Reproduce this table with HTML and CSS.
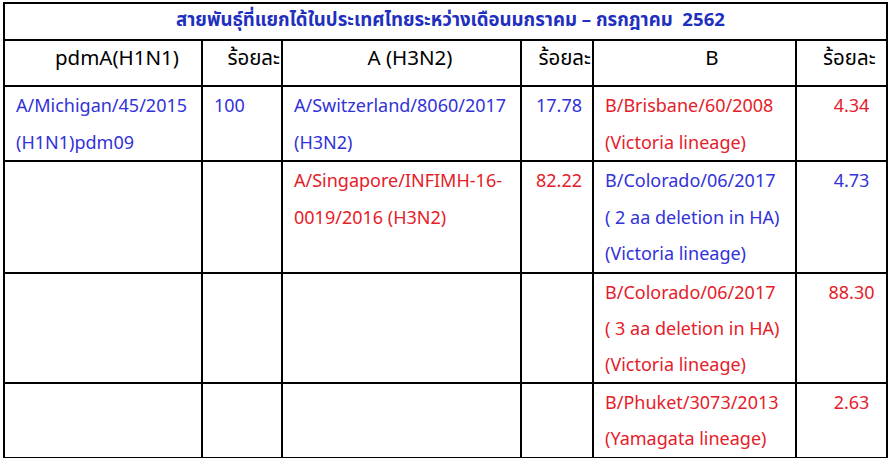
FILE: index.html
```html
<!DOCTYPE html>
<html lang="th">
<head>
<meta charset="utf-8">
<title>สายพันธุ์ที่แยกได้ในประเทศไทย</title>
<link rel="stylesheet" href="styles.css">
</head>
<body>
<table class="strains">
  <colgroup>
    <col class="c1"><col class="c2"><col class="c3"><col class="c4"><col class="c5"><col class="c6">
  </colgroup>
  <tr class="title-row">
    <td colspan="6" class="title">สายพันธุ์ที่แยกได้ในประเทศไทยระหว่างเดือนมกราคม – กรกฎาคม&nbsp; 2562</td>
  </tr>
  <tr class="head-row">
    <th class="h-1">pdmA(H1N1)</th>
    <th class="h-pct">ร้อยละ</th>
    <th class="h-3">A (H3N2)</th>
    <th class="h-pct">ร้อยละ</th>
    <th class="h-5">B</th>
    <th class="h-last">ร้อยละ</th>
  </tr>
  <tr class="r1">
    <td class="blue">A/Michigan/45/2015<br>(H1N1)pdm09</td>
    <td class="blue">100</td>
    <td class="blue">A/Switzerland/8060/2017<br>(H3N2)</td>
    <td class="blue num">17.78</td>
    <td class="red">B/Brisbane/60/2008<br>(Victoria lineage)</td>
    <td class="red last">4.34</td>
  </tr>
  <tr class="r2">
    <td></td>
    <td></td>
    <td class="red">A/Singapore/INFIMH-16-<br>0019/2016 (H3N2)</td>
    <td class="red num">82.22</td>
    <td class="blue">B/Colorado/06/2017<br>( 2 aa deletion in HA)<br>(Victoria lineage)</td>
    <td class="blue last">4.73</td>
  </tr>
  <tr class="r3">
    <td></td>
    <td></td>
    <td></td>
    <td></td>
    <td class="red">B/Colorado/06/2017<br>( 3 aa deletion in HA)<br>(Victoria lineage)</td>
    <td class="red last">88.30</td>
  </tr>
  <tr class="r4">
    <td></td>
    <td></td>
    <td></td>
    <td></td>
    <td class="red">B/Phuket/3073/2013<br>(Yamagata lineage)</td>
    <td class="red last">2.63</td>
  </tr>
</table>
</body>
</html>
```
FILE: styles.css
```css
html, body {
  margin: 0;
  padding: 0;
  background: #ffffff;
}
body {
  padding: 2px 0 0 3px;
  font-family: "Noto Sans", "Noto Sans Thai", "Loma", "Garuda", "Tlwg Typo", sans-serif;
  font-size: 18px;
  color: #000;
}
.strains {
  border-collapse: collapse;
  table-layout: fixed;
  width: 883px;
}
.c1 { width: 198px; }
.c2 { width: 80px; }
.c3 { width: 239px; }
.c4 { width: 72px; }
.c5 { width: 203px; }
.c6 { width: 91px; }
.strains td, .strains th {
  border: 2px solid #000;
  vertical-align: top;
  padding: 0 11px;
  line-height: 36.5px;
  font-weight: normal;
  white-space: nowrap;
}
.strains .title {
  height: 33px;
  line-height: 26px;
  padding: 2px 11px 0 21px;
  text-align: center;
  font-weight: bold;
  color: #1f2fc0;
  font-size: 18.6px;
}
.strains .head-row th {
  height: 40px;
  line-height: 24px;
  padding-top: 4px;
  padding-bottom: 0;
  font-size: 20.5px;
}
.strains .h-1 { text-align: center; padding-left: 39px; }
.strains .h-3 { text-align: center; padding-left: 28px; }
.strains .h-5 { text-align: center; padding-left: 46px; }
.strains .h-pct { text-align: right; padding-left: 0; padding-right: 1px; }
.strains .h-last { text-align: left; padding-left: 26px; padding-right: 0; }
.strains .r1 td { height: 70px; }
.strains .r2 td { height: 108px; }
.strains .r3 td { height: 106px; line-height: 36px; }
.strains .r4 td { height: 71px; }
.blue { color: #3232d8; }
.red { color: #e5202a; }
.strains .num { text-align: right; padding-right: 10px; }
.strains .last { text-align: center; padding-left: 20px; padding-right: 0; }
```
